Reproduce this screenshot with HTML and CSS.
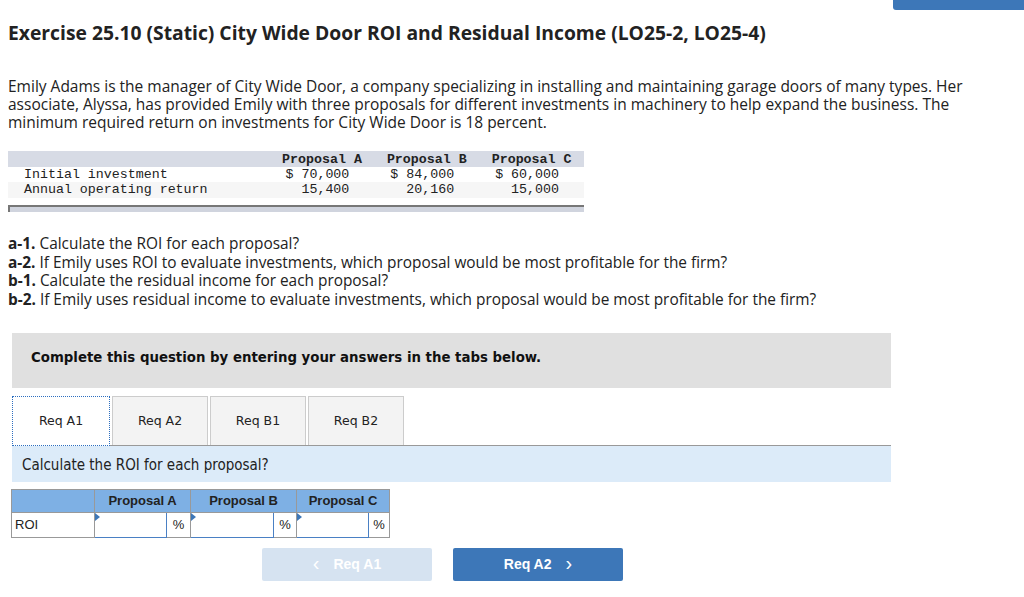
FILE: index.html
```html
<!DOCTYPE html>
<html>
<head>
<meta charset="utf-8">
<link rel="stylesheet" href="styles.css">
</head>
<body>
<div class="topbtn"></div>
<h1 class="title">Exercise 25.10 (Static) City Wide Door ROI and Residual Income (LO25-2, LO25-4)</h1>
<p class="intro">Emily Adams is the manager of City Wide Door, a company specializing in installing and maintaining garage doors of many types. Her associate, Alyssa, has provided Emily with three proposals for different investments in machinery to help expand the business. The minimum required return on investments for City Wide Door is 18 percent.</p>

<div class="data">
  <div class="drow dhead"><span class="dlabel"></span><span class="dcol">Proposal A</span><span class="dcol">Proposal B</span><span class="dcol">Proposal C</span></div>
  <div class="drow"><span class="dlabel">Initial investment</span><span class="dcol">$ 70,000</span><span class="dcol">$ 84,000</span><span class="dcol">$ 60,000</span></div>
  <div class="drow dalt"><span class="dlabel">Annual operating return</span><span class="dcol">15,400</span><span class="dcol">20,160</span><span class="dcol">15,000</span></div>
  <div class="dfoot"></div>
</div>

<p class="questions"><b>a-1.</b> Calculate the ROI for each proposal?<br><b>a-2.</b> If Emily uses ROI to evaluate investments, which proposal would be most profitable for the firm?<br><b>b-1.</b> Calculate the residual income for each proposal?<br><b>b-2.</b> If Emily uses residual income to evaluate investments, which proposal would be most profitable for the firm?</p>

<div class="panel">
  <div class="complete">Complete this question by entering your answers in the tabs below.</div>
  <div class="tabs">
    <div class="tab active">Req A1</div>
    <div class="tab">Req A2</div>
    <div class="tab">Req B1</div>
    <div class="tab">Req B2</div>
  </div>
  <div class="prompt">Calculate the ROI for each proposal?</div>
  <table class="answer">
    <tr class="ahead"><th class="alabel"></th><th colspan="2">Proposal A</th><th colspan="2">Proposal B</th><th colspan="2">Proposal C</th></tr>
    <tr><td class="alabel">ROI</td><td class="inp ia"><span class="flag"></span></td><td class="pct pa">%</td><td class="inp ib"><span class="flag"></span></td><td class="pct pb">%</td><td class="inp ic"><span class="flag"></span></td><td class="pct pc">%</td></tr>
  </table>
  <div class="nav">
    <div class="btn prev"><span class="chev">&lsaquo;</span>Req A1</div>
    <div class="btn next">Req A2<span class="chev r">&rsaquo;</span></div>
  </div>
</div>
</body>
</html>
```
FILE: styles.css
```css
html, body { margin: 0; padding: 0; background: #fff; }
body { width: 1024px; height: 597px; overflow: hidden; position: relative; font-family: "Open Sans", "Lato", sans-serif; color: #222; }

.topbtn { position: absolute; right: 0; top: 0; width: 131px; height: 10px; background: #3d77b8; border-bottom-left-radius: 3px; }

.title { margin: 0; padding: 21px 0 0 8px; font-size: 19.3px; font-weight: 700; line-height: 24px; color: #222; }

.intro { margin: 0; padding: 32px 40px 0 8px; font-size: 15.5px; line-height: 18px; color: #222; }

.data { margin: 20px 0 0 8px; width: 576px; font-family: "Liberation Mono", monospace; font-size: 13.3px; color: #222; }
.drow { display: flex; height: 15px; line-height: 16px; }
.dhead { background: #d7dbe5; font-weight: 700; height: 16px; line-height: 17px; }
.dalt { background: #f6f6f6; height: 16px; }
.dlabel { width: 246px; padding-left: 16px; }
.dcol { width: 105px; text-align: right; padding-right: 25px; box-sizing: border-box; }
.dhead .dcol { text-align: center; padding-right: 0; }
.dfoot { margin-top: 7px; height: 5px; background: #d0d4de; border-top: 2px solid #777; border-left: 2px solid #777; }

.questions { margin: 23px 0 0 8px; font-size: 15.4px; line-height: 18.7px; color: #222; }
.questions b { font-weight: 700; }

.panel { margin: 23px 0 0 12px; width: 879px; }
.complete { background: #e0e0e0; height: 55px; padding: 0 0 7px 19px; box-sizing: border-box; display: flex; align-items: center; font-family: "DejaVu Sans Condensed", "DejaVu Sans", sans-serif; font-weight: 700; font-size: 14.8px; color: #111; }

.tabs { display: flex; gap: 2px; margin-top: 8px; border-bottom: 1px solid #999; height: 49px; }
.tab { width: 96px; height: 49px; box-sizing: border-box; border: 1px solid #ccc; border-bottom: none; background: #f3f3f3; display: flex; align-items: center; justify-content: center; font-family: "DejaVu Sans", sans-serif; font-size: 12.5px; color: #222; }
.tab.active { background: #fff; border: 1px dotted #2d6fc0; height: 50px; width: 98px; }

.prompt { background: #dcebf9; height: 36px; line-height: 38px; padding-left: 10px; font-family: "DejaVu Sans Condensed", "DejaVu Sans", sans-serif; font-size: 15px; color: #222; }

.answer { margin: 7px 0 0 -1px; border-collapse: collapse; table-layout: fixed; font-family: "Liberation Sans", Arial, sans-serif; font-size: 13px; }
.answer td, .answer th { border: 1px solid #999; padding: 0; }
.ahead th { background: #7eb0e4; height: 22px; font-weight: 700; color: #222; text-align: center; }
th.alabel { width: 82px; }
td.alabel { text-align: left; padding-left: 3px; height: 24px; background: #fff; }
.inp { border: 1px solid #4a80c4 !important; position: relative; background: #fff; }
.ia { width: 71px; }
.pa { width: 23px; }
.ib { width: 82px; }
.pb { width: 22px; }
.ic { width: 71px; }
.pc { width: 20px; }
.pct { text-align: center; }
.flag { position: absolute; left: 0; top: 0; width: 0; height: 0; border-top: 4px solid transparent; border-bottom: 4px solid transparent; border-left: 5px solid #3d77b8; }

.nav { display: flex; gap: 21px; margin: 10px 0 0 250px; }
.btn { width: 170px; height: 33px; border-radius: 2px; display: flex; align-items: center; justify-content: center; font-family: "Liberation Sans", Arial, sans-serif; font-weight: 700; font-size: 14px; color: #fff; }
.btn.prev { background: #d6e3f1; }
.btn.next { background: #3d77b8; }
.chev { font-size: 20px; font-weight: 400; margin-right: 14px; line-height: 1; position: relative; top: -1px; }
.chev.r { margin-right: 0; margin-left: 14px; }
```
